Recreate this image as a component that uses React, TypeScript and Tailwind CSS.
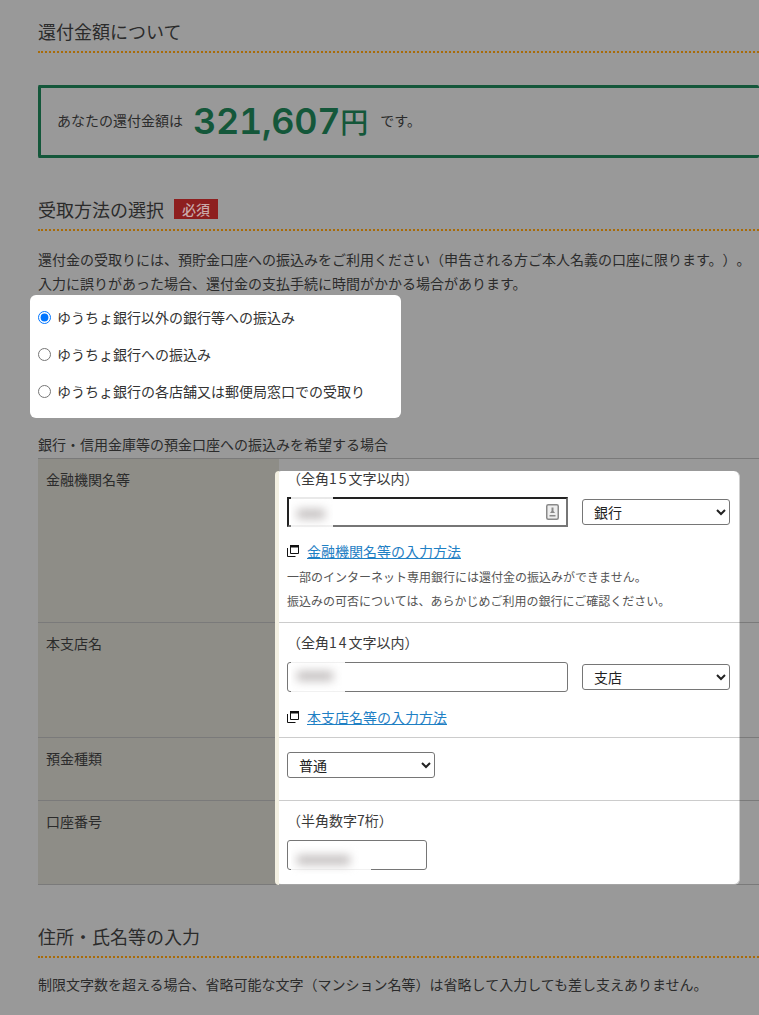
const font = { fontFamily: '"Noto Sans CJK JP", sans-serif' };

function SectionTitle({ children }: { children: React.ReactNode }) {
  return (
    <h2 className="flex items-center gap-[10px] border-b-2 border-dotted border-[#a86b08] pb-[7px] text-[18px] leading-[26px] font-normal text-[#2b2b2b]">
      {children}
    </h2>
  );
}

function WindowIcon() {
  return (
    <svg width="12" height="12" viewBox="0 0 12 12" className="shrink-0">
      <path d="M3.500 .5h8v8h-8z" fill="none" stroke="#111" />
      <path d="M3 0h9v2.500H3z" fill="#111" />
      <path d="M.5 3v8.500h8" fill="none" stroke="#111" />
    </svg>
  );
}

function HelpLink({ label }: { label: string }) {
  return (
    <div className="flex items-center gap-2 text-[14px] leading-5">
      <WindowIcon />
      <a href="#" className="text-[#1f80c4] underline">{label}</a>
    </div>
  );
}

function Blur({ className }: { className: string }) {
  return (
    <div className={`absolute overflow-hidden bg-white/90 ${className}`}>
      <div className="absolute top-1/2 left-[6px] h-[10px] w-2/3 -translate-y-1/2 bg-[#c4c0c0] blur-[5px]" />
    </div>
  );
}

function Row({ label, children, className }: { label: string; children: React.ReactNode; className: string }) {
  return (
    <div className={`relative z-10 grid grid-cols-[241px_1fr] border-b border-black/20 ${className}`}>
      <div className="bg-[#8e8d87] px-2 pt-[10px] text-[14px] leading-5 text-[#2b2b2b]">{label}</div>
      <div className="pr-[29px] pl-2 text-[#3a3a3a]">{children}</div>
    </div>
  );
}

const selectClass = 'h-[26px] w-[148px] rounded-[3px] border border-[#767676] bg-white pl-[7px] text-[14px] text-[#222]';
const inputClass = 'block h-[30px] rounded-[3px] border border-[#767676] bg-white';

export default function App() {
  return (
    <div style={font} className="h-[1015px] w-[759px] overflow-hidden bg-[#999999] pt-[18px] pl-[38px] text-[14px] text-[#2b2b2b] [text-spacing-trim:space-all]">
      <SectionTitle>還付金額について</SectionTitle>

      <div className="mt-[32px] flex h-[73px] items-center rounded-[2px] border-[3px] border-r-0 border-[#14573a] pb-[2px] pl-4">
        <span>あなたの還付金額は</span>
        <span style={{ fontFamily: 'Inter, sans-serif' }} className="ml-[10px] text-[36px] font-semibold tracking-[-0.3px] text-[#14573a] tabular-nums">321,607</span>
        <span className="text-[28px] font-medium text-[#14573a]">円</span>
        <span className="ml-[12px]">です。</span>
      </div>

      <div className="mt-[38px]">
        <SectionTitle>
          受取方法の選択
          <span className="flex h-5 w-11 items-center justify-center bg-[#8e1f1f] text-[14px] font-medium text-[#c9a9a9]">必須</span>
        </SectionTitle>
      </div>

      <p className="mt-[16px] text-[14px] leading-6 whitespace-nowrap">
        還付金の受取りには、預貯金口座への振込みをご利用ください（申告される方ご本人名義の口座に限ります。）。
        <br />
        入力に誤りがあった場合、還付金の支払手続に時間がかかる場合があります。
      </p>

      <div className="-ml-2 flex h-[123px] w-[371px] flex-col gap-[17px] rounded-[6px] bg-white pt-[12px] pl-2 text-[#333]">
        {['ゆうちょ銀行以外の銀行等への振込み', 'ゆうちょ銀行への振込み', 'ゆうちょ銀行の各店舗又は郵便局窓口での受取り'].map((label, i) => (
          <label key={label} className="flex h-5 items-center gap-[6px]">
            <input type="radio" name="receive" defaultChecked={i === 0} className="h-[13px] w-[13px]" />
            {label}
          </label>
        ))}
      </div>

      <p className="mt-[16px] text-[14px] leading-5">銀行・信用金庫等の預金口座への振込みを希望する場合</p>

      <div className="relative mt-[4px] border-t border-black/20">
        <div className="absolute top-[12px] left-[237px] z-0 h-[414px] w-[465px] rounded-[6px] border-r border-b border-[#cfcfcf] bg-white" />
        <div className="absolute top-[12px] left-[237px] z-20 h-[414px] w-1 rounded-l-[6px] bg-[#f3f0e2]" />

        <Row label="金融機関名等" className="h-[164px]">
          <p className="pt-[9px] leading-5">（全角<span className="tracking-[2px]">15</span>文字以内）</p>
          <div className="mt-[9px] flex items-start gap-[14px]">
            <div className="relative">
              <input
                type="text"
                className="block h-[30px] w-[281px] border-2 border-t-[#222] border-r-[#767676] border-b-[#767676] border-l-[#222] bg-white"
              />
              <svg width="13" height="16" viewBox="0 0 13 16" className="absolute top-[7px] right-[9px]">
                <rect x=".75" y=".75" width="11.500" height="14.500" rx="1.500" fill="#eee" stroke="#8a8a8a" strokeWidth="1.500" />
                <path d="M5.500 3.500h2v3.500l1.500 2h-5l1.500-2zM3.500 11h6v1.500h-6z" fill="#8a8a8a" />
              </svg>
            </div>
            <select className={`${selectClass} mt-[2px]`} defaultValue="銀行">
              <option>銀行</option>
              <option>信用金庫</option>
            </select>
          </div>
          <div className="mt-[14px]">
            <HelpLink label="金融機関名等の入力方法" />
          </div>
          <p className="mt-[6px] text-[12px] leading-5 text-[#555]">一部のインターネット専用銀行には還付金の振込みができません。</p>
          <p className="mt-1 text-[12px] leading-5 text-[#555]">振込みの可否については、あらかじめご利用の銀行にご確認ください。</p>
        </Row>

        <Row label="本支店名" className="h-[115px]">
          <p className="pt-[9px] leading-5">（全角<span className="tracking-[2px]">14</span>文字以内）</p>
          <div className="mt-[10px] flex items-center gap-[14px]">
            <input type="text" className={`${inputClass} w-[281px]`} />
            <select className={selectClass} defaultValue="支店">
              <option>支店</option>
              <option>本店</option>
            </select>
          </div>
          <div className="mt-[15px]">
            <HelpLink label="本支店名等の入力方法" />
          </div>
        </Row>

        <Row label="預金種類" className="h-[63px]">
          <select className={`${selectClass} mt-[14px] block`} defaultValue="普通">
            <option>普通</option>
            <option>当座</option>
          </select>
        </Row>

        <Row label="口座番号" className="h-[84px]">
          <p className="pt-[9px] leading-5">（半角数字7桁）</p>
          <input type="text" className={`${inputClass} mt-[10px] w-[140px]`} />
        </Row>

        <Blur className="top-[34px] left-[253px] z-30 h-[42px] w-[42px]" />
        <Blur className="top-[199px] left-[253px] z-30 h-[35px] w-[54px]" />
        <Blur className="top-[382px] left-[253px] z-30 h-[37px] w-[80px]" />
      </div>

      <div className="mt-[38px]">
        <SectionTitle>住所・氏名等の入力</SectionTitle>
      </div>
      <p className="mt-[16px] text-[14px] leading-5">制限文字数を超える場合、省略可能な文字（マンション名等）は省略して入力しても差し支えありません。</p>
    </div>
  );
}
